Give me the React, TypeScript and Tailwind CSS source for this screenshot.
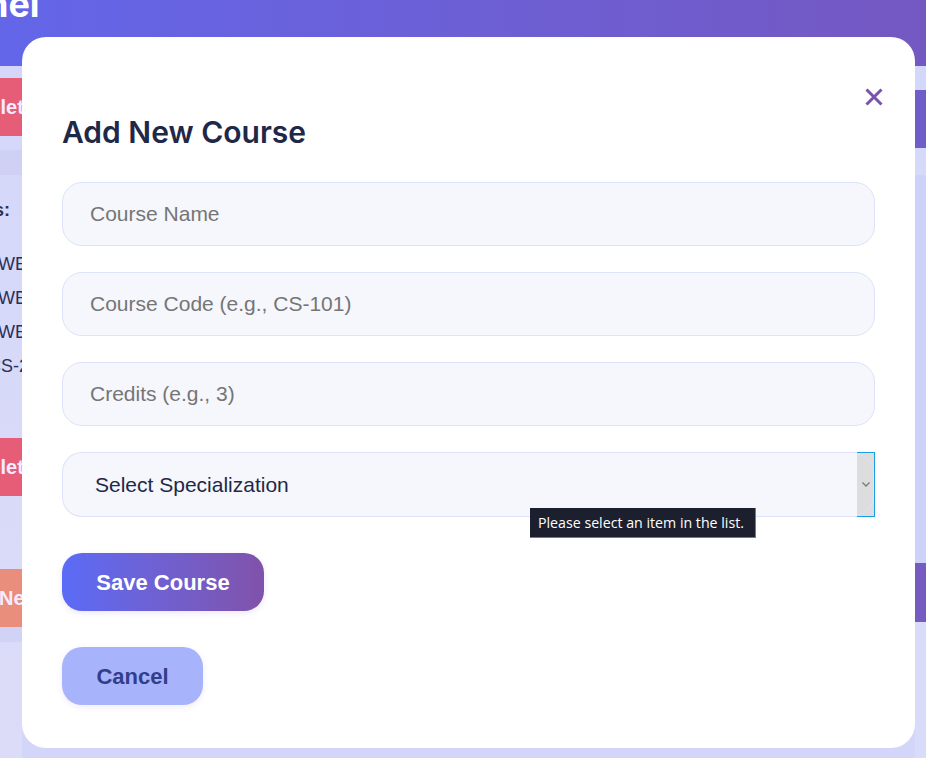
import React from "react";

export default function App() {
  const sans = { fontFamily: '"Liberation Sans", Arial, sans-serif' };
  return (
    <div className="relative w-[926px] h-[758px] overflow-hidden bg-[#d3d6f9]" style={sans}>
      {/* background page */}
      <div className="flex flex-col h-full">
        <div className="h-[66px] shrink-0 bg-gradient-to-r from-[#6366e9] to-[#7458c2] flex items-start">
          <span
            className="ml-[-14px] mt-[-16px] text-[36px] font-bold text-white leading-[40px]"
            style={{ fontFamily: "Inter, sans-serif" }}
          >
            nel
          </span>
        </div>
        <div className="flex flex-1">
          {/* left column */}
          <div className="w-[22px] overflow-hidden flex flex-col bg-gradient-to-b from-[#d4d7fa] to-[#dcdcf8]">
            <div className="h-[12px]" />
            <div className="h-[58px] bg-[#e65d78] flex items-center whitespace-nowrap">
              <span className="ml-[-25px] text-[20px] font-bold text-[#f3ecff]">Delete</span>
            </div>
            <div className="h-[14px]" />
            <div className="h-[25px] bg-[#cfd0f4]" />
            <div className="flex flex-col text-[#2a2f55] whitespace-nowrap">
              <div className="h-[20px]" />
              <span className="ml-[-12px] text-[18px] font-bold leading-[30px]">ts:</span>
              <div className="h-[22px]" />
              <span className="ml-[-14px] text-[18px] leading-[34px]">SWE-</span>
              <span className="ml-[-14px] text-[18px] leading-[34px]">SWE-</span>
              <span className="ml-[-14px] text-[18px] leading-[34px]">SWE-</span>
              <span className="ml-[-12px] text-[18px] leading-[34px]">CS-2</span>
            </div>
            <div className="h-[55px]" />
            <div className="h-[58px] bg-[#e65d78] flex items-center whitespace-nowrap">
              <span className="ml-[-25px] text-[20px] font-bold text-[#f3ecff]">Delete</span>
            </div>
            <div className="h-[73px]" />
            <div className="h-[58px] bg-[#e98d7c] flex items-center whitespace-nowrap">
              <span className="ml-[-1px] text-[20px] font-bold text-[#f3ecff]">New</span>
            </div>
            <div className="h-[15px] bg-[#d0d2f6]" />
          </div>
          <div className="flex-1" />
          {/* right column */}
          <div className="w-[11px] flex flex-col">
            <div className="h-[24px] bg-[#d3d7fa]" />
            <div className="h-[58px] bg-[#6f5dc8]" />
            <div className="h-[27px] bg-[#d5d9fa]" />
            <div className="h-[388px] bg-[#cdd2f8]" />
            <div className="h-[59px] bg-[#765bc0]" />
            <div className="flex-1 bg-[#d9dcf9]" />
          </div>
        </div>
      </div>

      {/* modal */}
      <div className="absolute left-[22px] top-[37px] w-[893px] h-[711px] bg-white rounded-[24px] px-[40px] pt-[76px] flex flex-col">
        <button className="absolute right-[32px] top-[51px] w-[18px] h-[18px] flex items-center justify-center">
          <svg width="18" height="18" viewBox="0 0 18 18">
            <path d="M1.5 1.5 L16.5 16.5 M16.5 1.5 L1.5 16.5" stroke="#7a52ad" strokeWidth="3" strokeLinecap="butt" />
          </svg>
        </button>
        <h2
          className="text-[30px] font-semibold text-[#1f2847] leading-[38px]"
          style={{ fontFamily: "Inter, sans-serif" }}
        >
          Add New Course
        </h2>
        <div className="h-[31px]" />
        <div className="flex flex-col gap-[26px]">
          <div className="h-[64px] rounded-[20px] border border-[#dce3fa] bg-[#f5f7fc] flex items-center pl-[27px] text-[21px] text-[#757575]">
            Course Name
          </div>
          <div className="h-[64px] rounded-[20px] border border-[#dce3fa] bg-[#f5f7fc] flex items-center pl-[27px] text-[21px] text-[#757575]">
            Course Code (e.g., CS-101)
          </div>
          <div className="h-[64px] rounded-[20px] border border-[#dce3fa] bg-[#f5f7fc] flex items-center pl-[27px] text-[21px] text-[#757575]">
            Credits (e.g., 3)
          </div>
          <div className="relative h-[65px] flex">
            <div className="flex-1 rounded-l-[20px] border border-r-0 border-[#dce3fa] bg-[#f5f7fc] flex items-center pl-[32px] text-[21px] text-[#1f2847]">
              Select Specialization
            </div>
            <div className="relative w-[18px] bg-[#dddddd] border border-l-0 border-[#1a9fe6] flex items-center justify-center overflow-hidden">
              <div className="absolute right-0 top-0 w-[36px] h-full rounded-r-[20px] border border-[#dce3fa]" />
              <svg width="8" height="5" viewBox="0 0 8 5" className="relative">
                <path d="M0.5 0.5 L4 4 L7.5 0.5" stroke="#7a7a7a" strokeWidth="1.3" fill="none" />
              </svg>
            </div>
            <div
              className="absolute left-[468px] top-[56px] w-[226px] h-[30px] bg-[#1b1f2e] border border-[#7a7a80] border-t-0 border-l-0 text-white flex items-center pl-[8px] whitespace-nowrap"
              style={{ fontFamily: '"Open Sans", "Noto Sans", sans-serif', fontSize: "14.2px" }}
            >
              Please select an item in the list.
            </div>
          </div>
        </div>
        <div className="h-[36px]" />
        <div className="flex">
          <div className="w-[202px] h-[58px] rounded-[20px] bg-gradient-to-r from-[#5a6bf6] to-[#8052aa] flex items-center justify-center text-white text-[22px] font-bold shadow-[0_2px_6px_rgba(120,90,200,0.15)]">
            Save Course
          </div>
        </div>
        <div className="h-[36px]" />
        <div className="flex">
          <div className="w-[141px] h-[58px] rounded-[20px] bg-[#a7b4fb] flex items-center justify-center text-[#333e8b] text-[22px] font-bold shadow-[0_2px_6px_rgba(120,90,200,0.12)]">
            Cancel
          </div>
        </div>
      </div>
    </div>
  );
}
